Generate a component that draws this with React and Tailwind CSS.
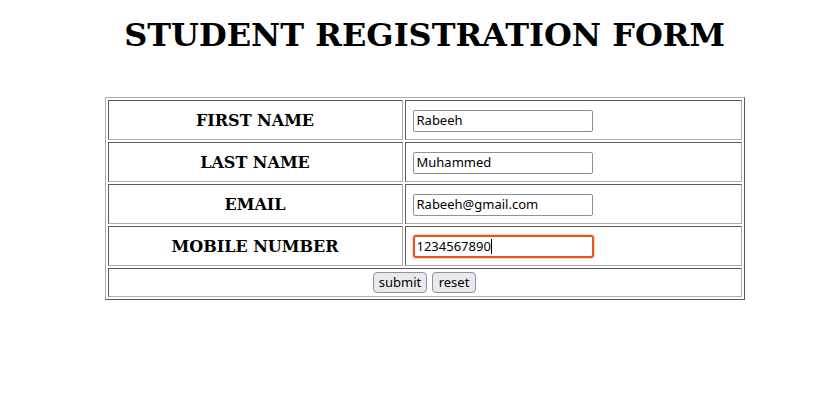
import React from "react";

const serif = { fontFamily: '"DejaVu Serif", serif' };

function Row({ label, value, focused }) {
  return (
    <tr>
      <td
        className="h-[40px] w-[295px] border border-t-[#5a5a5a] border-l-[#5a5a5a] border-b-[#ababab] border-r-[#ababab] text-center align-middle text-[16px] font-bold text-black p-0"
        style={serif}
      >
        <span className="relative top-[1px]">{label}</span>
      </td>
      <td className="h-[40px] border border-t-[#5a5a5a] border-l-[#5a5a5a] border-b-[#ababab] border-r-[#ababab] p-0 pl-[7px] align-middle">
        {focused ? (
          <div className="w-[183px] h-[25px] rounded-[4px] bg-[#fcd9cc] p-[1px] -ml-[1px] mt-[1px]">
            <div className="h-full w-full rounded-[3px] border-2 border-[#e95420] bg-white flex items-center pl-[2px] text-[13px] text-black font-['Noto_Sans',sans-serif]">
              <span>{value}</span>
              <span className="inline-block w-[1px] h-[15px] bg-black"></span>
            </div>
          </div>
        ) : (
          <div className="w-[180px] h-[22px] mt-[1px] rounded-[2px] border border-[#8f8f9d] bg-white flex items-center pl-[3px] text-[13px] text-black font-['Noto_Sans',sans-serif]">
            {value}
          </div>
        )}
      </td>
    </tr>
  );
}

export default function App() {
  return (
    <div className="w-[818px] h-[407px] bg-white pl-[31px] flex flex-col items-center">
      <h1
        className="mt-[19px] text-[32px] leading-[32px] font-bold text-black"
        style={serif}
      >
        STUDENT REGISTRATION FORM
      </h1>
      <table className="mt-[46px] w-[640px] border-separate border-spacing-[2px] border border-t-[#ababab] border-l-[#ababab] border-b-[#5a5a5a] border-r-[#5a5a5a]">
        <tbody>
          <Row label="FIRST NAME" value="Rabeeh" />
          <Row label="LAST NAME" value="Muhammed" />
          <Row label="EMAIL" value="Rabeeh@gmail.com" />
          <Row label="MOBILE NUMBER" value="1234567890" focused />
          <tr>
            <td
              colSpan={2}
              className="h-[29px] border border-t-[#5a5a5a] border-l-[#5a5a5a] border-b-[#ababab] border-r-[#ababab] p-0 align-middle"
            >
              <div className="flex justify-center gap-[5px] font-['Noto_Sans',sans-serif] text-[13px] text-black">
                <div className="h-[21px] w-[54px] rounded-[4px] border border-[#8f8f9d] bg-[#e9e9ed] flex items-center justify-center">
                  submit
                </div>
                <div className="h-[21px] w-[44px] rounded-[4px] border border-[#8f8f9d] bg-[#e9e9ed] flex items-center justify-center">
                  reset
                </div>
              </div>
            </td>
          </tr>
        </tbody>
      </table>
    </div>
  );
}
